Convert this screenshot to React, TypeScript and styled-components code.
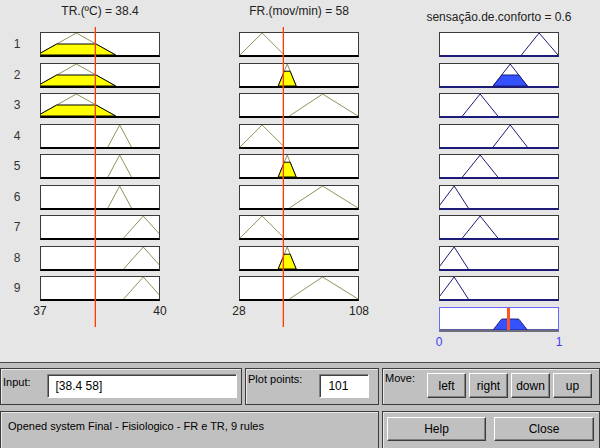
import React from "react";
import styled, { createGlobalStyle } from "styled-components";

const GlobalStyle = createGlobalStyle`
  html, body {
    margin: 0;
    padding: 0;
  }
  body {
    width: 600px;
    height: 448px;
    overflow: hidden;
    background: #c0c0c0;
    font-family: "Liberation Sans", Arial, sans-serif;
  }
`;

type Tri = [number, number, number];

interface Variable {
  title: string;
  range: [number, number];
  value: number;
  mfs: Tri[];
}

const TR: Variable = {
  title: "TR.(ºC) = 38.4",
  range: [37, 40],
  value: 38.4,
  mfs: [
    [36.9, 37.9, 38.9],
    [38.7, 39.0, 39.3],
    [39.1, 39.6, 40.1],
  ],
};

const FR: Variable = {
  title: "FR.(mov/min) = 58",
  range: [28, 108],
  value: 58,
  mfs: [
    [28, 43, 58],
    [53.9, 60, 66.1],
    [61.5, 84, 108],
  ],
};

const OUT: Variable = {
  title: "sensação.de.conforto = 0.6",
  range: [0, 1],
  value: 0.6,
  mfs: [
    [0.69, 0.84, 1.0],
    [0.45, 0.595, 0.74],
    [0.19, 0.34, 0.49],
    [-0.02, 0.12, 0.24],
  ],
};

// [TR mf, FR mf, output mf]
const rules: [number, number, number][] = [
  [0, 0, 0],
  [0, 1, 1],
  [0, 2, 2],
  [1, 0, 1],
  [1, 1, 2],
  [1, 2, 3],
  [2, 0, 2],
  [2, 1, 3],
  [2, 2, 3],
];

const mu = ([a, b, c]: Tri, x: number) =>
  Math.max(0, Math.min((x - a) / (b - a), (c - x) / (c - b), 1));

const W = 118;
const H = 22;

const palette = {
  input: { line: "#92925a", fill: "#ffff00", edge: "#000000" },
  output: { line: "#1c1c78", fill: "#3452ff", edge: "#1c1c78" },
};

type Kind = "input" | "output";

/** one membership function box */
const MfPlot = ({
  tri,
  range,
  level,
  kind,
}: {
  tri: Tri;
  range: [number, number];
  level: number;
  kind: Kind;
}) => {
  const sx = (v: number) => ((v - range[0]) / (range[1] - range[0])) * W;
  const sy = (m: number) => H - m * H;
  const [a, b, c] = tri;
  const col = palette[kind];
  const clip = [
    [a, 0],
    [a + level * (b - a), level],
    [c - level * (c - b), level],
    [c, 0],
  ]
    .map(([x, m]) => `${sx(x)},${sy(m)}`)
    .join(" ");
  return (
    <PlotBox $bottom={kind === "input" ? "#000" : "#1c1c78"}>
      <svg width={W} height={H}>
        <polyline
          points={`${sx(a)},${sy(0)} ${sx(b)},${sy(1)} ${sx(c)},${sy(0)}`}
          fill="none"
          stroke={col.line}
          strokeWidth={1}
        />
        {level > 0 && (
          <polygon points={clip} fill={col.fill} stroke={col.edge} strokeWidth={1} />
        )}
      </svg>
    </PlotBox>
  );
};

const AggregatePlot = ({ strengths }: { strengths: number[] }) => {
  const pts: [number, number][] = [];
  let num = 0;
  let den = 0;
  for (let i = 0; i <= 100; i++) {
    const x = i / 100;
    let m = 0;
    rules.forEach((r, k) => {
      m = Math.max(m, Math.min(strengths[k], mu(OUT.mfs[r[2]], x)));
    });
    num += x * m;
    den += m;
    pts.push([x, m]);
  }
  const centroid = den > 0 ? num / den : 0.5;
  const line = pts.map(([x, m]) => `${x * W},${H - m * H}`).join(" ");
  return (
    <AggBox>
      <svg width={W} height={H}>
        <polygon
          points={`0,${H} ${line} ${W},${H}`}
          fill="#3452ff"
          stroke="#1c1c78"
          strokeWidth={1}
        />
        <rect
          x={Math.round(centroid * W) - 3}
          y={0}
          width={3}
          height={H}
          fill="#ff5522"
        />
      </svg>
    </AggBox>
  );
};

const App = () => {
  const strengths = rules.map((r) =>
    Math.min(mu(TR.mfs[r[0]], TR.value), mu(FR.mfs[r[1]], FR.value))
  );

  const inputColumn = (v: Variable, idx: 0 | 1, offset: number) => {
    const px = Math.round(((v.value - v.range[0]) / (v.range[1] - v.range[0])) * W);
    return (
      <Column $offset={offset}>
        <Title $top={4}>{v.title}</Title>
        <Rows>
          {rules.map((r, i) => {
            const tri = v.mfs[r[idx]];
            return (
              <MfPlot
                key={i}
                tri={tri}
                range={v.range}
                level={mu(tri, v.value)}
                kind="input"
              />
            );
          })}
        </Rows>
        <AxisLabels>
          <span>{v.range[0]}</span>
          <span>{v.range[1]}</span>
        </AxisLabels>
        <ValueLine style={{ left: px }} />
      </Column>
    );
  };

  return (
    <>
      <GlobalStyle />
      <Window>
        <PlotArea>
          <RuleNumbers>
            {rules.map((_, i) => (
              <span key={i}>{i + 1}</span>
            ))}
          </RuleNumbers>
          {inputColumn(TR, 0, 0)}
          {inputColumn(FR, 1, 79)}
          <Column $offset={80}>
            <Title $top={10}>{OUT.title}</Title>
            <Rows>
              {rules.map((r, i) => (
                <MfPlot
                  key={i}
                  tri={OUT.mfs[r[2]]}
                  range={OUT.range}
                  level={strengths[i]}
                  kind="output"
                />
              ))}
              <AggregatePlot strengths={strengths} />
            </Rows>
            <AxisLabels $blue>
              <span>0</span>
              <span>1</span>
            </AxisLabels>
          </Column>
        </PlotArea>

        <ControlBar>
          <Panel>
            <FieldLabel $top={7}>Input:</FieldLabel>
            <Field $width={190} $gap={16}>
              [38.4 58]
            </Field>
          </Panel>
          <Panel>
            <FieldLabel $top={4}>Plot points:</FieldLabel>
            <Field $width={50} $gap={17}>
              101
            </Field>
          </Panel>
          <Panel>
            <FieldLabel $top={3}>Move:</FieldLabel>
            <MoveButtons>
              <Button $width={39}>left</Button>
              <Button $width={39}>right</Button>
              <Button $width={39}>down</Button>
              <Button $width={39}>up</Button>
            </MoveButtons>
          </Panel>
          <StatusPanel>Opened system Final - Fisiologico - FR e TR, 9 rules</StatusPanel>
          <ActionPanel>
            <Button $width={99} $height={24}>
              Help
            </Button>
            <Button $width={100} $height={24}>
              Close
            </Button>
          </ActionPanel>
        </ControlBar>
      </Window>
    </>
  );
};

export default App;

const Window = styled.div`
  width: 600px;
  height: 448px;
  display: flex;
  flex-direction: column;
`;

const PlotArea = styled.div`
  height: 362px;
  flex-shrink: 0;
  background: #e6e6e6;
  display: flex;
  align-items: flex-start;
  color: #222;
  font-size: 12px;
`;

const RuleNumbers = styled.div`
  width: 40px;
  padding-top: 32px;
  display: flex;
  flex-direction: column;
  gap: 5.5px;
  span {
    height: 25px;
    line-height: 25px;
    padding-left: 3px;
    text-align: center;
    width: 28px;
    color: #333;
  }
`;

const Column = styled.div<{ $offset: number }>`
  position: relative;
  width: 120px;
  margin-left: ${(p) => p.$offset}px;
  display: flex;
  flex-direction: column;
`;

const Title = styled.div<{ $top: number }>`
  height: ${(p) => 32 - p.$top}px;
  padding-top: ${(p) => p.$top}px;
  line-height: 14px;
  white-space: nowrap;
  display: flex;
  justify-content: center;
  margin: 0 -40px;
`;

const Rows = styled.div`
  display: flex;
  flex-direction: column;
  gap: 5.5px;
`;

const PlotBox = styled.div<{ $bottom: string }>`
  width: 120px;
  height: 25px;
  box-sizing: border-box;
  background: #fff;
  border: 1px solid #3a3a3a;
  border-bottom: 2px solid ${(p) => p.$bottom};
  svg {
    display: block;
  }
`;

const AggBox = styled.div`
  width: 120px;
  height: 25px;
  box-sizing: border-box;
  background: #fff;
  border: 1px solid #6a6aff;
  border-bottom: 2px solid #6e6e7e;
  svg {
    display: block;
  }
`;

const AxisLabels = styled.div<{ $blue?: boolean }>`
  display: flex;
  justify-content: space-between;
  margin: 3px -20px 0;
  line-height: 14px;
  color: ${(p) => (p.$blue ? "#3c3cff" : "#222")};
  span {
    width: 40px;
    text-align: center;
  }
`;

const ValueLine = styled.div`
  position: absolute;
  top: 27px;
  height: 300px;
  width: 1px;
  background: #ff3c00;
  box-shadow: -1px 0 0 rgba(255, 110, 60, 0.45);
`;

const ControlBar = styled.div`
  flex: 1;
  border-top: 1px solid #4a4a4a;
  background: #c0c0c0;
  padding-top: 5px;
  display: grid;
  grid-template-columns: 242px 134px 218px;
  grid-template-rows: 37px 40px;
  column-gap: 3px;
  row-gap: 6px;
  font-size: 11px;
  color: #000;
`;

const Panel = styled.div`
  box-sizing: border-box;
  border: 1px solid #3c3c3c;
  box-shadow: inset 1px 1px 0 #e8e8e8;
  display: flex;
  align-items: flex-start;
  padding: 0 2px;
`;

const FieldLabel = styled.span<{ $top: number }>`
  margin-top: ${(p) => p.$top}px;
  line-height: 13px;
  white-space: nowrap;
`;

const Field = styled.div<{ $width: number; $gap: number }>`
  box-sizing: border-box;
  width: ${(p) => p.$width}px;
  height: 24px;
  margin: 5px 0 0 ${(p) => p.$gap}px;
  background: #fff;
  border: 1px solid;
  border-color: #808080 #fff #fff #808080;
  box-shadow: inset 1px 1px 0 #404040;
  padding-left: 8px;
  line-height: 22px;
  font-size: 12px;
`;

const MoveButtons = styled.div`
  display: flex;
  gap: 3px;
  margin: 4px 0 0 auto;
  padding-right: 5px;
`;

const Button = styled.div<{ $width: number; $height?: number }>`
  box-sizing: border-box;
  width: ${(p) => p.$width}px;
  height: ${(p) => p.$height ?? 25}px;
  background: #c0c0c0;
  border: 1px solid;
  border-color: #ffffff #3c3c3c #3c3c3c #ffffff;
  box-shadow: inset -1px -1px 0 #808080;
  display: flex;
  align-items: center;
  justify-content: center;
  font-size: 12px;
`;

const StatusPanel = styled(Panel)`
  grid-column: 1 / span 2;
  padding: 7px 7px 0;
  line-height: 14px;
  font-size: 11px;
`;

const ActionPanel = styled(Panel)`
  padding: 5px 0 0 4px;
  gap: 8px;
`;
